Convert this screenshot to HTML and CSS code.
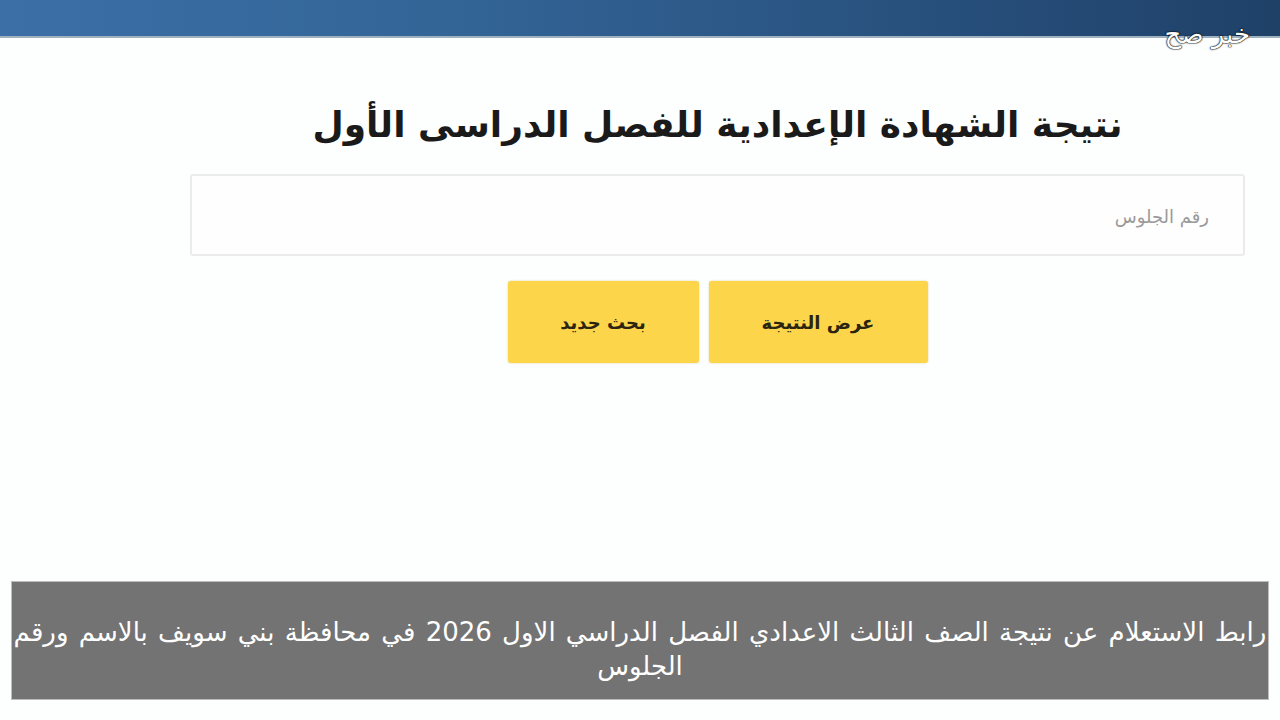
FILE: index.html
```html
<!DOCTYPE html>
<html lang="ar" dir="rtl">
<head>
<meta charset="utf-8">
<title>نتيجة الشهادة الإعدادية</title>
<link rel="stylesheet" href="styles.css">
</head>
<body>
<div class="page">
  <div class="topbar"></div>
  <div class="watermark">خبر صح</div>
  <main class="content">
    <h1 class="title">نتيجة الشهادة الإعدادية للفصل الدراسى الأول</h1>
    <div class="field"><span class="placeholder">رقم الجلوس</span></div>
    <div class="actions">
      <div class="btn">عرض النتيجة</div>
      <div class="btn btn-new">بحث جديد</div>
    </div>
  </main>
  <div class="caption">رابط الاستعلام عن نتيجة الصف الثالث الاعدادي الفصل الدراسي الاول 2026 في محافظة بني سويف بالاسم ورقم الجلوس</div>
</div>
</body>
</html>
```
FILE: styles.css
```css
html, body {
  margin: 0;
  padding: 0;
  background: #ffffff;
}
body {
  font-family: "DejaVu Sans", sans-serif;
  width: 1280px;
  height: 720px;
  overflow: hidden;
}
.page {
  position: relative;
  width: 1280px;
  height: 720px;
  display: flex;
  flex-direction: column;
  background: #fdfefe;
}
.topbar {
  height: 36px;
  flex: none;
  background: linear-gradient(90deg, #3b6fa6 0%, #336597 35%, #2a5482 65%, #1f4168 100%);
  border-bottom: 2px solid #9fb0bf;
}
.watermark {
  position: absolute;
  top: 19px;
  right: 30px;
  color: #ffffff;
  font-size: 26px;
  font-weight: normal;
  text-shadow: 0 0 1px #000, 0 0 1px #000, 0 0 2px #000;
}
.content {
  width: 1055px;
  margin: 0 35px 0 190px;
  display: flex;
  flex-direction: column;
  align-items: center;
}
.title {
  margin: 57px 0 0;
  font-size: 36px;
  font-weight: bold;
  color: #1a1a1a;
  line-height: 60px;
  letter-spacing: -0.5px;
}
.field {
  margin-top: 19px;
  box-sizing: border-box;
  width: 1055px;
  height: 82px;
  border: 2px solid #ebebeb;
  border-radius: 3px;
  background: #fefefe;
  display: flex;
  align-items: center;
  padding-right: 34px;
}
.placeholder {
  color: #9a9a9a;
  font-size: 18px;
  margin-top: 2px;
}
.actions {
  margin-top: 25px;
  display: flex;
  gap: 10px;
  align-self: stretch;
  justify-content: center;
}
.btn {
  width: 219px;
  height: 82px;
  box-sizing: border-box;
  background: #fcd54b;
  border-radius: 3px;
  box-shadow: 0 0 2px rgba(200, 160, 40, 0.5);
  display: flex;
  align-items: center;
  justify-content: center;
  font-size: 18px;
  font-weight: bold;
  color: #2a2410;
}
.btn-new {
  width: 191px;
}
.caption {
  margin: auto 11px 20px 11px;
  box-sizing: border-box;
  height: 119px;
  background: #737373;
  border: 1px solid #bdbdbd;
  color: #ffffff;
  font-size: 26px;
  line-height: 34px;
  word-spacing: 2px;
  text-align: center;
  padding-top: 33px;
  font-weight: normal;
}
```
